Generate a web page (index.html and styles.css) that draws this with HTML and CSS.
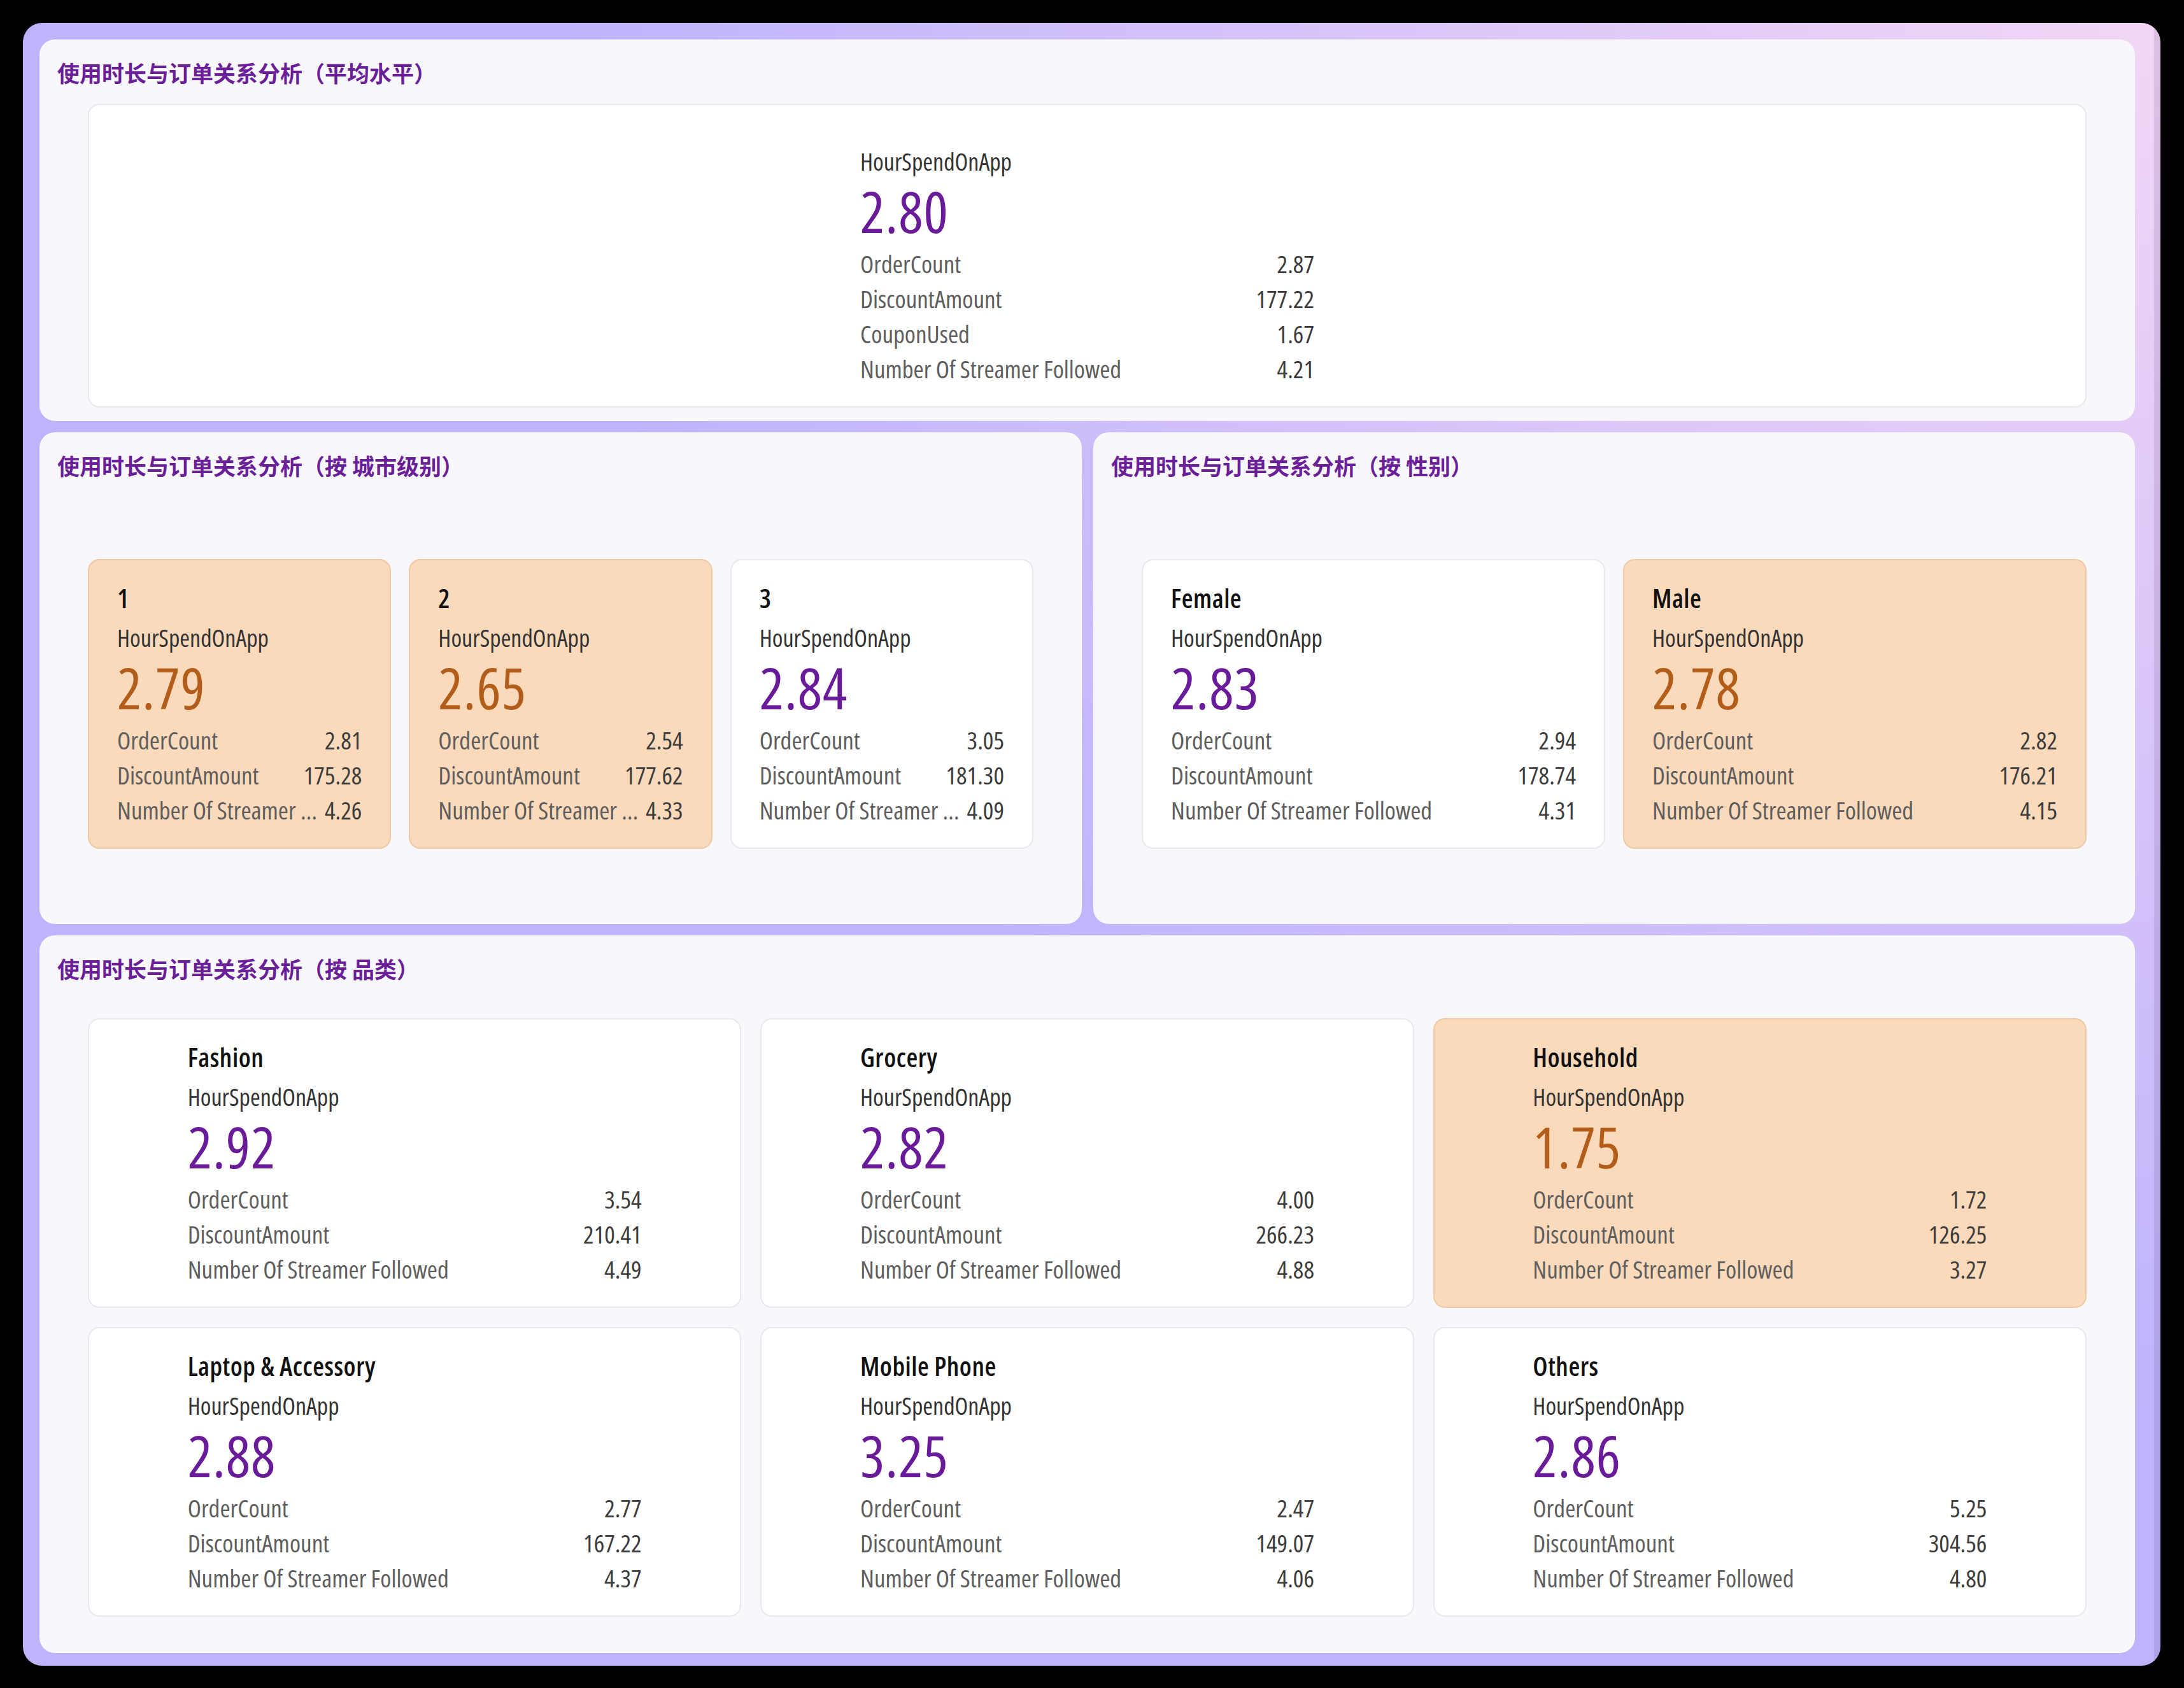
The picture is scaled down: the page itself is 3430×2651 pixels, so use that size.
FILE: index.html
```html
<!DOCTYPE html>
<html lang="zh-CN">
<head>
<meta charset="utf-8">
<title>使用时长与订单关系分析</title>
<link rel="stylesheet" href="styles.css">
</head>
<body>
<div class="frame">
  <div class="scrollbar"></div>
  <div class="stack">

    <section class="panel panel-top">
      <h2 class="ptitle">使用时长与订单关系分析（平均水平）</h2>
      <div class="area">
        <div class="card card-avg">
          <div class="inner">
            <div class="metric">HourSpendOnApp</div>
            <div class="big">2.80</div>
            <div class="row"><span class="k">OrderCount</span><span class="v">2.87</span></div>
            <div class="row"><span class="k">DiscountAmount</span><span class="v">177.22</span></div>
            <div class="row"><span class="k">CouponUsed</span><span class="v">1.67</span></div>
            <div class="row"><span class="k">Number Of Streamer Followed</span><span class="v">4.21</span></div>
          </div>
        </div>
      </div>
    </section>

    <div class="pair">
      <section class="panel panel-mid">
        <h2 class="ptitle">使用时长与订单关系分析（按 城市级别）</h2>
        <div class="area">
          <div class="grid grid-3">
            <div class="card hl">
              <div class="inner">
                <div class="grp">1</div>
                <div class="metric">HourSpendOnApp</div>
                <div class="big">2.79</div>
                <div class="row"><span class="k">OrderCount</span><span class="v">2.81</span></div>
                <div class="row"><span class="k">DiscountAmount</span><span class="v">175.28</span></div>
                <div class="row"><span class="k">Number Of Streamer Followed</span><span class="v">4.26</span></div>
              </div>
            </div>
            <div class="card hl">
              <div class="inner">
                <div class="grp">2</div>
                <div class="metric">HourSpendOnApp</div>
                <div class="big">2.65</div>
                <div class="row"><span class="k">OrderCount</span><span class="v">2.54</span></div>
                <div class="row"><span class="k">DiscountAmount</span><span class="v">177.62</span></div>
                <div class="row"><span class="k">Number Of Streamer Followed</span><span class="v">4.33</span></div>
              </div>
            </div>
            <div class="card">
              <div class="inner">
                <div class="grp">3</div>
                <div class="metric">HourSpendOnApp</div>
                <div class="big">2.84</div>
                <div class="row"><span class="k">OrderCount</span><span class="v">3.05</span></div>
                <div class="row"><span class="k">DiscountAmount</span><span class="v">181.30</span></div>
                <div class="row"><span class="k">Number Of Streamer Followed</span><span class="v">4.09</span></div>
              </div>
            </div>
          </div>
        </div>
      </section>

      <section class="panel panel-mid">
        <h2 class="ptitle">使用时长与订单关系分析（按 性别）</h2>
        <div class="area">
          <div class="grid grid-2">
            <div class="card">
              <div class="inner">
                <div class="grp">Female</div>
                <div class="metric">HourSpendOnApp</div>
                <div class="big">2.83</div>
                <div class="row"><span class="k">OrderCount</span><span class="v">2.94</span></div>
                <div class="row"><span class="k">DiscountAmount</span><span class="v">178.74</span></div>
                <div class="row"><span class="k">Number Of Streamer Followed</span><span class="v">4.31</span></div>
              </div>
            </div>
            <div class="card hl">
              <div class="inner">
                <div class="grp">Male</div>
                <div class="metric">HourSpendOnApp</div>
                <div class="big">2.78</div>
                <div class="row"><span class="k">OrderCount</span><span class="v">2.82</span></div>
                <div class="row"><span class="k">DiscountAmount</span><span class="v">176.21</span></div>
                <div class="row"><span class="k">Number Of Streamer Followed</span><span class="v">4.15</span></div>
              </div>
            </div>
          </div>
        </div>
      </section>
    </div>

    <section class="panel panel-cat">
      <h2 class="ptitle">使用时长与订单关系分析（按 品类）</h2>
      <div class="area">
        <div class="grid grid-cat">
          <div class="card">
            <div class="inner">
              <div class="grp">Fashion</div>
              <div class="metric">HourSpendOnApp</div>
              <div class="big">2.92</div>
              <div class="row"><span class="k">OrderCount</span><span class="v">3.54</span></div>
              <div class="row"><span class="k">DiscountAmount</span><span class="v">210.41</span></div>
              <div class="row"><span class="k">Number Of Streamer Followed</span><span class="v">4.49</span></div>
            </div>
          </div>
          <div class="card">
            <div class="inner">
              <div class="grp">Grocery</div>
              <div class="metric">HourSpendOnApp</div>
              <div class="big">2.82</div>
              <div class="row"><span class="k">OrderCount</span><span class="v">4.00</span></div>
              <div class="row"><span class="k">DiscountAmount</span><span class="v">266.23</span></div>
              <div class="row"><span class="k">Number Of Streamer Followed</span><span class="v">4.88</span></div>
            </div>
          </div>
          <div class="card hl">
            <div class="inner">
              <div class="grp">Household</div>
              <div class="metric">HourSpendOnApp</div>
              <div class="big">1.75</div>
              <div class="row"><span class="k">OrderCount</span><span class="v">1.72</span></div>
              <div class="row"><span class="k">DiscountAmount</span><span class="v">126.25</span></div>
              <div class="row"><span class="k">Number Of Streamer Followed</span><span class="v">3.27</span></div>
            </div>
          </div>
          <div class="card">
            <div class="inner">
              <div class="grp">Laptop &amp; Accessory</div>
              <div class="metric">HourSpendOnApp</div>
              <div class="big">2.88</div>
              <div class="row"><span class="k">OrderCount</span><span class="v">2.77</span></div>
              <div class="row"><span class="k">DiscountAmount</span><span class="v">167.22</span></div>
              <div class="row"><span class="k">Number Of Streamer Followed</span><span class="v">4.37</span></div>
            </div>
          </div>
          <div class="card">
            <div class="inner">
              <div class="grp">Mobile Phone</div>
              <div class="metric">HourSpendOnApp</div>
              <div class="big">3.25</div>
              <div class="row"><span class="k">OrderCount</span><span class="v">2.47</span></div>
              <div class="row"><span class="k">DiscountAmount</span><span class="v">149.07</span></div>
              <div class="row"><span class="k">Number Of Streamer Followed</span><span class="v">4.06</span></div>
            </div>
          </div>
          <div class="card">
            <div class="inner">
              <div class="grp">Others</div>
              <div class="metric">HourSpendOnApp</div>
              <div class="big">2.86</div>
              <div class="row"><span class="k">OrderCount</span><span class="v">5.25</span></div>
              <div class="row"><span class="k">DiscountAmount</span><span class="v">304.56</span></div>
              <div class="row"><span class="k">Number Of Streamer Followed</span><span class="v">4.80</span></div>
            </div>
          </div>
        </div>
      </div>
    </section>

  </div>
</div>
</body>
</html>
```
FILE: styles.css
```css
* { box-sizing: border-box; }

html, body {
  margin: 0;
  height: 100%;
}

body {
  background: #000;
  padding: 36px 37px 35px 36px;
  font-family: "Open Sans", "Noto Sans CJK SC", sans-serif;
  font-stretch: 75%;
}

.frame {
  position: relative;
  height: 100%;
  border-radius: 30px;
  overflow: hidden;
  padding: 26px 40px 0 26px;
  background:
    radial-gradient(ellipse 75% 85% at 100% 0%, rgba(242, 214, 245, 1) 0%, rgba(242, 214, 245, 0) 100%),
    #beb3fc;
}

.scrollbar {
  position: absolute;
  top: 0;
  right: 0;
  bottom: 0;
  width: 10px;
  background: rgba(70, 40, 100, 0.12);
}

.stack {
  display: flex;
  flex-direction: column;
  gap: 18px;
}

.panel {
  display: flex;
  flex-direction: column;
  background: #f8f7fc;
  border-radius: 24px;
  padding: 0 28px 21px;
}

.panel-top { height: 599px; }
.panel-mid { height: 772px; }
.panel-cat { height: 1127px; }

.pair {
  display: grid;
  grid-template-columns: 1637px 1636px;
  gap: 18px;
}

.ptitle {
  margin: 0;
  padding-top: 28px;
  height: 102px;
  line-height: 48px;
  font-family: "Noto Sans CJK SC", sans-serif;
  font-stretch: normal;
  font-size: 35px;
  font-weight: 700;
  color: #6a1e98;
  white-space: nowrap;
}

.area {
  flex: 1;
  display: flex;
  flex-direction: column;
  justify-content: center;
  padding: 0 48px;
}

.panel-cat .area { padding-bottom: 8px; }

.grid { display: grid; }
.grid-3 { grid-template-columns: repeat(3, 1fr); gap: 28px; }
.grid-2 { grid-template-columns: repeat(2, 1fr); gap: 28px; }
.grid-cat { grid-template-columns: repeat(3, 1fr); gap: 30px; }

.card {
  background: #fff;
  border: 2px solid #e8e8ee;
  border-radius: 18px;
  padding: 32px 44px;
  min-width: 0;
}

.card.hl {
  background: #fbdabb;
  border-color: #efc9a4;
}

.card-avg { padding-top: 61px; }

.inner {
  max-width: 713px;
  margin: 0 auto;
}

.grp {
  height: 55px;
  line-height: 55px;
  margin-bottom: 7px;
  font-size: 41px;
  font-weight: 600;
  letter-spacing: 0.5px;
  color: #111;
  white-space: nowrap;
}

.metric {
  height: 55px;
  line-height: 55px;
  font-size: 38px;
  color: #333;
  white-space: nowrap;
}

.big {
  height: 100px;
  line-height: 100px;
  margin-bottom: 5px;
  font-size: 90px;
  font-weight: 500;
  letter-spacing: 1px;
  color: #6a1b9a;
}

.hl .big { color: #b35d1b; }

.row {
  display: flex;
  justify-content: space-between;
  gap: 4px;
  height: 55px;
  line-height: 55px;
  font-size: 39px;
}

.k {
  flex: 1 1 auto;
  min-width: 0;
  overflow: hidden;
  text-overflow: ellipsis;
  white-space: nowrap;
  color: #5e5e5e;
}

.v {
  flex: none;
  color: #3c3c3c;
  font-weight: 500;
}
```
